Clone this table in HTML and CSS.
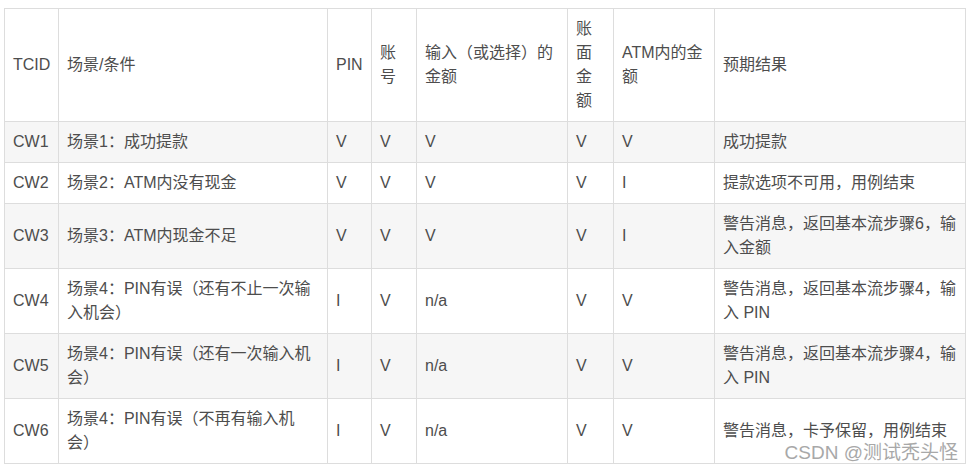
FILE: index.html
```html
<!DOCTYPE html>
<html lang="zh-CN">
<head>
<meta charset="utf-8">
<title>ATM 取款测试用例</title>
<link rel="stylesheet" href="styles.css">
</head>
<body>
<div class="wrap">
<table class="cases">
  <colgroup>
    <col class="c-id">
    <col class="c-scene">
    <col class="c-pin">
    <col class="c-acct">
    <col class="c-input">
    <col class="c-bal">
    <col class="c-atm">
    <col class="c-result">
  </colgroup>
  <thead>
    <tr>
      <td class="nowrap">TCID</td>
      <td>场景/条件</td>
      <td>PIN</td>
      <td>账号</td>
      <td>输入（或选择）的金额</td>
      <td>账面金额</td>
      <td>ATM内的金额</td>
      <td>预期结果</td>
    </tr>
  </thead>
  <tbody>
    <tr class="alt">
      <td>CW1</td><td>场景1：成功提款</td><td>V</td><td>V</td><td>V</td><td>V</td><td>V</td><td>成功提款</td>
    </tr>
    <tr>
      <td>CW2</td><td>场景2：ATM内没有现金</td><td>V</td><td>V</td><td>V</td><td>V</td><td>I</td><td>提款选项不可用，用例结束</td>
    </tr>
    <tr class="alt">
      <td>CW3</td><td>场景3：ATM内现金不足</td><td>V</td><td>V</td><td>V</td><td>V</td><td>I</td><td>警告消息，返回基本流步骤6，输入金额</td>
    </tr>
    <tr>
      <td>CW4</td><td>场景4：PIN有误（还有不止一次输入机会）</td><td>I</td><td>V</td><td>n/a</td><td>V</td><td>V</td><td>警告消息，返回基本流步骤4，输入 PIN</td>
    </tr>
    <tr class="alt">
      <td>CW5</td><td>场景4：PIN有误（还有一次输入机会）</td><td>I</td><td>V</td><td>n/a</td><td>V</td><td>V</td><td>警告消息，返回基本流步骤4，输入 PIN</td>
    </tr>
    <tr>
      <td>CW6</td><td>场景4：PIN有误（不再有输入机会）</td><td>I</td><td>V</td><td>n/a</td><td>V</td><td>V</td><td>警告消息，卡予保留，用例结束</td>
    </tr>
  </tbody>
</table>
<div class="watermark">CSDN @测试秃头怪</div>
</div>
</body>
</html>
```

FILE: styles.css
```css
html, body {
  margin: 0;
  padding: 0;
  background: #ffffff;
}
body {
  padding: 8px 0 0 4px;
  font-family: "Liberation Sans", "Noto Sans CJK SC", sans-serif;
  font-size: 16px;
  color: #4d4d4d;
}
.wrap {
  position: relative;
  width: 962px;
}
.cases {
  border-collapse: collapse;
  table-layout: fixed;
  width: 962px;
}
.cases td {
  border: 1px solid #dddddd;
  padding: 8px;
  line-height: 24px;
  vertical-align: middle;
  text-align: left;
  text-spacing-trim: space-all;
}
.cases td.nowrap {
  white-space: nowrap;
}
.cases tr.alt td {
  background: #f6f6f6;
}
.c-id { width: 54px; }
.c-scene { width: 269px; }
.c-pin { width: 44px; }
.c-acct { width: 45px; }
.c-input { width: 151px; }
.c-bal { width: 46px; }
.c-atm { width: 101px; }
.c-result { width: 251px; }
.watermark {
  position: absolute;
  right: 8px;
  bottom: 0;
  font-size: 19px;
  line-height: 22px;
  color: #a8a8a8;
  text-shadow: 0 0 1px #ffffff;
  white-space: nowrap;
}
```
